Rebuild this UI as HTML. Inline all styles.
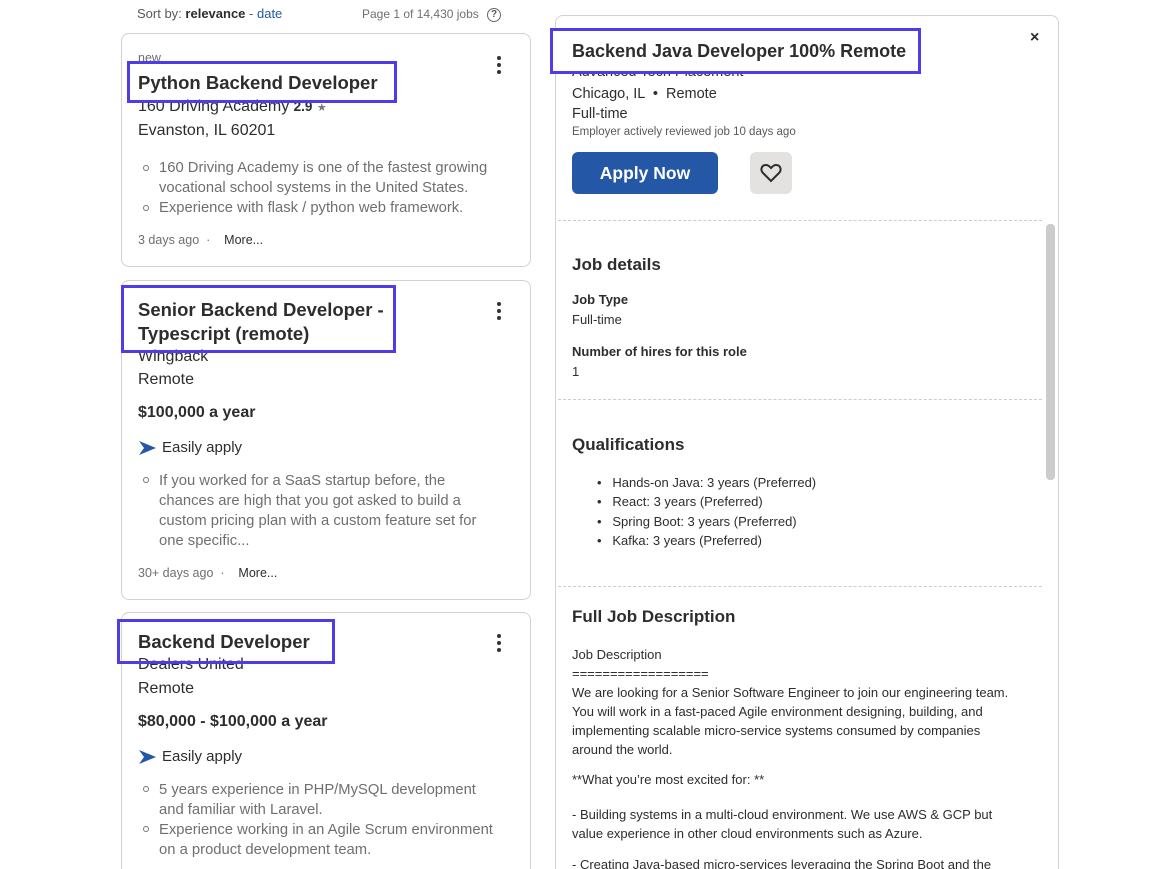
<!DOCTYPE html>
<html><head><meta charset="utf-8"><style>
*{margin:0;padding:0;box-sizing:border-box}
html,body{width:1168px;height:869px;overflow:hidden}
body{background:#fff;position:relative;font-family:"Liberation Sans",sans-serif;color:#2d2d2d}
.a{position:absolute;white-space:nowrap}
.card{position:absolute;left:121px;width:410px;border:1px solid #d4d2d0;border-radius:8px;background:#fff}
.hl{position:absolute;border:3px solid #4f3be8}
.t{font-size:18.5px;font-weight:bold;color:#2d2d2d}
.c{font-size:16px;color:#2d2d2d}
.s{font-size:14.8px;color:#6f6f6f;line-height:20px}
.dot{position:absolute;width:6px;height:6px;border:1px solid #777;border-radius:50%}
.m{font-size:12.5px;color:#6f6f6f}
.k{position:absolute;width:4px;height:4px;background:#333;border-radius:50%}
.r{font-size:13px;color:#2d2d2d}
.h{font-size:17px;font-weight:bold;color:#2d2d2d}
.sep{position:absolute;left:558px;width:484px;border-top:1px dashed #ccc}
</style></head><body>
<div class="a" style="left:137px;top:6px;font-size:13px;color:#595959">Sort by: <b style="color:#2d2d2d">relevance</b> - <span style="color:#2557a7">date</span></div>
<div class="a" style="left:362px;top:7px;font-size:12px;color:#6f6f6f">Page 1 of 14,430 jobs</div>
<div class="a" style="left:487px;top:8px;width:14px;height:14px;border:1.5px solid #666;border-radius:50%;font-size:10px;text-align:center;line-height:11px;color:#555;font-weight:bold">?</div>

<div class="card" style="top:33px;height:234px"></div>
<div class="a m" style="left:138px;top:51px">new</div>
<div class="a c" style="left:138px;top:98px">160 Driving Academy <b style="font-size:13.5px">2.9</b> <span style="font-size:11px;color:#777">★</span></div>
<div class="a c" style="left:138px;top:122px">Evanston, IL 60201</div>
<div class="dot" style="left:143px;top:165px"></div>
<div class="a s" style="left:159px;top:158px">160 Driving Academy is one of the fastest growing<br>vocational school systems in the United States.</div>
<div class="dot" style="left:143px;top:205px"></div>
<div class="a s" style="left:159px;top:198px">Experience with flask / python web framework.</div>
<div class="a m" style="left:138px;top:233px">3 days ago &nbsp;·&nbsp;&nbsp;&nbsp; <span style="color:#2d2d2d">More...</span></div>
<div class="k" style="left:497px;top:56px"></div><div class="k" style="left:497px;top:63px"></div><div class="k" style="left:497px;top:70px"></div>
<div class="hl" style="left:127px;top:61px;width:270px;height:42px"></div>
<div class="a t" style="left:138px;top:72px">Python Backend Developer</div>

<div class="card" style="top:280px;height:320px"></div>
<div class="a c" style="left:138px;top:348px">Wingback</div>
<div class="a c" style="left:138px;top:371px">Remote</div>
<div class="a" style="left:138px;top:404px;font-size:16px;font-weight:bold">$100,000 a year</div>
<svg class="a" style="left:139px;top:441px" width="18" height="14" viewBox="0 0 18 14"><path d="M0 0L17 7L0 14L5 7Z" fill="#2557a7"/></svg>
<div class="a" style="left:162px;top:439px;font-size:15px">Easily apply</div>
<div class="dot" style="left:143px;top:477px"></div>
<div class="a s" style="left:159px;top:471px">If you worked for a SaaS startup before, the<br>chances are high that you got asked to build a<br>custom pricing plan with a custom feature set for<br>one specific...</div>
<div class="a m" style="left:138px;top:566px">30+ days ago &nbsp;·&nbsp;&nbsp;&nbsp; <span style="color:#2d2d2d">More...</span></div>
<div class="k" style="left:497px;top:302px"></div><div class="k" style="left:497px;top:309px"></div><div class="k" style="left:497px;top:316px"></div>
<div class="hl" style="left:121px;top:285px;width:275px;height:68px"></div>
<div class="a t" style="left:138px;top:298px;line-height:24px">Senior Backend Developer -<br>Typescript (remote)</div>

<div class="card" style="top:612px;height:280px"></div>
<div class="a c" style="left:138px;top:656px">Dealers United</div>
<div class="a c" style="left:138px;top:680px">Remote</div>
<div class="a" style="left:138px;top:713px;font-size:16px;font-weight:bold">$80,000 - $100,000 a year</div>
<svg class="a" style="left:139px;top:750px" width="18" height="14" viewBox="0 0 18 14"><path d="M0 0L17 7L0 14L5 7Z" fill="#2557a7"/></svg>
<div class="a" style="left:162px;top:748px;font-size:15px">Easily apply</div>
<div class="dot" style="left:143px;top:786px"></div>
<div class="a s" style="left:159px;top:780px">5 years experience in PHP/MySQL development<br>and familiar with Laravel.</div>
<div class="dot" style="left:143px;top:826px"></div>
<div class="a s" style="left:159px;top:820px">Experience working in an Agile Scrum environment<br>on a product development team.</div>
<div class="k" style="left:497px;top:634px"></div><div class="k" style="left:497px;top:641px"></div><div class="k" style="left:497px;top:648px"></div>
<div class="hl" style="left:117px;top:619px;width:218px;height:45px"></div>
<div class="a t" style="left:138px;top:631px">Backend Developer</div>

<div style="position:absolute;left:555px;top:15px;width:504px;height:870px;border:1px solid #d4d2d0;border-radius:8px"></div>
<div class="a" style="left:1030px;top:29px;font-size:16px;font-weight:bold">×</div>
<div class="a" style="left:572px;top:64px;font-size:14.5px">Advanced Tech Placement</div>
<div class="a" style="left:572px;top:86px;font-size:14.5px">Chicago, IL &nbsp;•&nbsp; Remote</div>
<div class="a" style="left:572px;top:106px;font-size:14.5px">Full-time</div>
<div class="a" style="left:572px;top:126px;font-size:11.5px;color:#595959">Employer actively reviewed job 10 days ago</div>
<div class="a" style="left:572px;top:152px;width:146px;height:42px;background:#2557a7;border-radius:6px;color:#fff;font-size:17.5px;font-weight:bold;text-align:center;line-height:42px">Apply Now</div>
<div class="a" style="left:750px;top:152px;width:42px;height:42px;background:#e4e2e0;border-radius:6px"></div>
<svg class="a" style="left:760px;top:163px" width="22" height="20" viewBox="0 0 22 20"><path d="M11 18L3 10C0 7 1.5 2 6 2C8.5 2 10 4 11 5C12 4 13.5 2 16 2C20.5 2 22 7 19 10Z" fill="none" stroke="#2d2d2d" stroke-width="2"/></svg>
<div class="sep" style="top:220px"></div>
<div class="a" style="left:1046px;top:224px;width:9px;height:256px;background:#ccc;border-radius:4px"></div>
<div class="a h" style="left:572px;top:255px">Job details</div>
<div class="a r" style="left:572px;top:292px;font-weight:bold">Job Type</div>
<div class="a r" style="left:572px;top:312px">Full-time</div>
<div class="a r" style="left:572px;top:344px;font-weight:bold">Number of hires for this role</div>
<div class="a r" style="left:572px;top:364px">1</div>
<div class="sep" style="top:399px"></div>
<div class="a h" style="left:572px;top:435px">Qualifications</div>
<div class="a r" style="left:597px;top:473px;line-height:19.3px">•&nbsp;&nbsp; Hands-on Java: 3 years (Preferred)<br>•&nbsp;&nbsp; React: 3 years (Preferred)<br>•&nbsp;&nbsp; Spring Boot: 3 years (Preferred)<br>•&nbsp;&nbsp; Kafka: 3 years (Preferred)</div>
<div class="sep" style="top:586px"></div>
<div class="a h" style="left:572px;top:607px">Full Job Description</div>
<div class="a r" style="left:572px;top:645px;line-height:19px">Job Description<br>==================<br>We are looking for a Senior Software Engineer to join our engineering team.<br>You will work in a fast-paced Agile environment designing, building, and<br>implementing scalable micro-service systems consumed by companies<br>around the world.</div>
<div class="a r" style="left:572px;top:772px">**What you’re most excited for: **</div>
<div class="a r" style="left:572px;top:805px;line-height:19px">- Building systems in a multi-cloud environment. We use AWS &amp; GCP but<br>value experience in other cloud environments such as Azure.</div>
<div class="a r" style="left:572px;top:857px">- Creating Java-based micro-services leveraging the Spring Boot and the</div>

<div class="hl" style="left:550px;top:28px;width:371px;height:46px;background:#fff"></div>
<div class="a" style="left:572px;top:41px;font-size:18px;font-weight:bold">Backend Java Developer 100% Remote</div>
</body></html>
